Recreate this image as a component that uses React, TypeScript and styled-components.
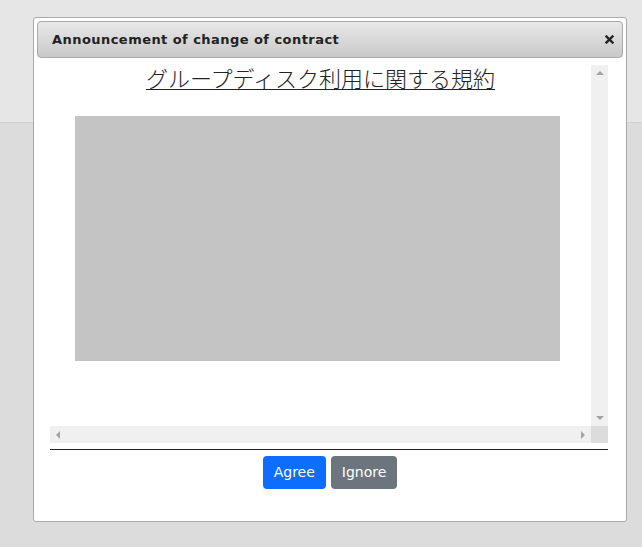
import React from "react";
import styled, { createGlobalStyle } from "styled-components";

const Global = createGlobalStyle`
  html, body { margin: 0; padding: 0; }
  body { background: #dcdcdc; font-family: "DejaVu Sans", Verdana, sans-serif; }
`;

const Page = styled.div`
  position: relative;
  width: 642px;
  height: 547px;
  overflow: hidden;
  background: #dcdcdc;
`;

const Header = styled.div`
  height: 122px;
  background: #e6e6e6;
  border-bottom: 1px solid #d2d2d2;
`;

const Dialog = styled.div`
  position: absolute;
  left: 33px;
  top: 17px;
  width: 586px;
  height: 497px;
  background: #fff;
  border: 1px solid #a9a9a9;
  border-radius: 3px;
  padding: 3px;
  box-sizing: content-box;
  display: flex;
  flex-direction: column;
`;

const TitleBar = styled.div`
  height: 35px;
  border: 1px solid #aaaaaa;
  border-radius: 4px;
  background: linear-gradient(#e8e8e8, #c9c9c9);
  display: flex;
  align-items: center;
  justify-content: space-between;
  padding: 0 8px 0 14px;
`;

const Title = styled.span`
  font-family: "DejaVu Sans", Verdana, sans-serif;
  font-weight: bold;
  font-size: 13px;
  letter-spacing: 0.45px;
  color: #222;
`;

const Close = styled.button`
  all: unset;
  display: flex;
  width: 10px;
  height: 10px;
  align-items: center;
  justify-content: center;
`;

const Body = styled.div`
  margin: 7px 15px 0 13px;
  display: grid;
  grid-template-columns: 541px 17px;
  grid-template-rows: 361px 17px;
`;

const Viewport = styled.div`
  background: #fff;
`;

const Heading = styled.h1`
  margin: 0;
  text-align: center;
  font-family: "Noto Sans CJK JP", sans-serif;
  font-weight: 300;
  font-size: 22px;
  line-height: 24px;
  color: #222;
  text-decoration: underline;
  text-underline-offset: 2px;
  text-decoration-thickness: 1px;
`;

const Placeholder = styled.div`
  margin: 27px 0 0 25px;
  width: 485px;
  height: 245px;
  background: #c4c4c4;
`;

const Track = styled.div<{ $dir: "v" | "h" }>`
  background: #f0f0f0;
  display: flex;
  flex-direction: ${(p) => (p.$dir === "v" ? "column" : "row")};
  justify-content: space-between;
  align-items: center;
  padding: ${(p) => (p.$dir === "v" ? "6px 0" : "0 6px")};
`;

const Corner = styled.div`
  background: #dcdcdc;
`;

const Arrow = styled.span<{ $d: "up" | "down" | "left" | "right" }>`
  width: 0;
  height: 0;
  border-style: solid;
  ${(p) =>
    p.$d === "up"
      ? "border-width: 0 4px 4px 4px; border-color: transparent transparent #a3a3a3 transparent;"
      : p.$d === "down"
      ? "border-width: 4px 4px 0 4px; border-color: #a3a3a3 transparent transparent transparent;"
      : p.$d === "left"
      ? "border-width: 4px 4px 4px 0; border-color: transparent #a3a3a3 transparent transparent;"
      : "border-width: 4px 0 4px 4px; border-color: transparent transparent transparent #a3a3a3;"}
`;

const Rule = styled.hr`
  margin: 6px 15px 0 13px;
  border: 0;
  border-top: 1px solid #222;
  height: 0;
`;

const Buttons = styled.div`
  display: flex;
  justify-content: center;
  gap: 5px;
  margin-top: 6px;
`;

const Btn = styled.button<{ $variant: "primary" | "secondary" }>`
  font-family: "DejaVu Sans", Verdana, sans-serif;
  font-size: 14px;
  line-height: 21px;
  padding: 6px 11px;
  border: 0;
  border-radius: 4px;
  color: #fff;
  background: ${(p) => (p.$variant === "primary" ? "#0d6efd" : "#6c757d")};
`;

export default function App() {
  return (
    <Page>
      <Global />
      <Header />
      <Dialog>
        <TitleBar>
          <Title>Announcement of change of contract</Title>
          <Close aria-label="close">
            <svg width="9" height="9" viewBox="0 0 9 9">
              <path d="M1.5 1.5 L7.5 7.5 M7.5 1.5 L1.5 7.5" stroke="#222" strokeWidth="2.4" strokeLinecap="square" />
            </svg>
          </Close>
        </TitleBar>
        <Body>
          <Viewport>
            <Heading>グループディスク利用に関する規約</Heading>
            <Placeholder />
          </Viewport>
          <Track $dir="v">
            <Arrow $d="up" />
            <Arrow $d="down" />
          </Track>
          <Track $dir="h">
            <Arrow $d="left" />
            <Arrow $d="right" />
          </Track>
          <Corner />
        </Body>
        <Rule />
        <Buttons>
          <Btn $variant="primary">Agree</Btn>
          <Btn $variant="secondary">Ignore</Btn>
        </Buttons>
      </Dialog>
    </Page>
  );
}
